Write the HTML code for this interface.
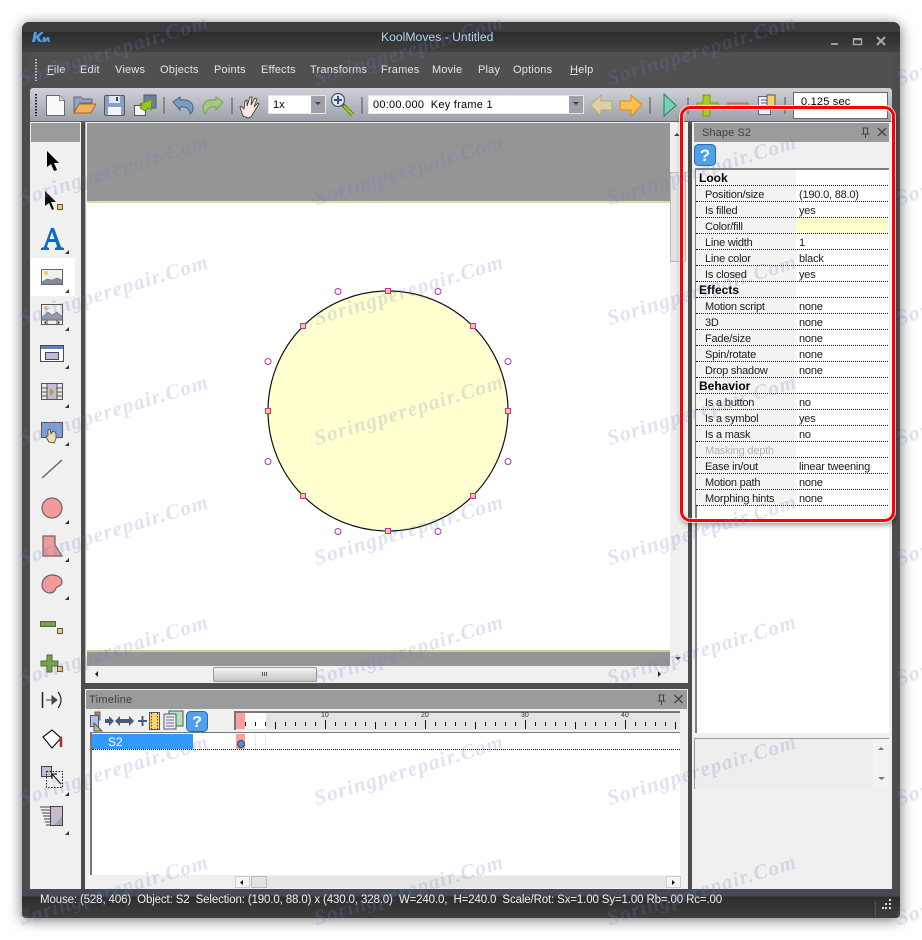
<!DOCTYPE html>
<html><head><meta charset="utf-8"><title>KoolMoves</title>
<style>
html,body{margin:0;padding:0;background:#fff;width:922px;height:940px;overflow:hidden}
body{position:relative;font-family:"Liberation Sans",sans-serif;font-size:11px;color:#111}
.a{position:absolute}
.t{position:absolute;white-space:nowrap}
.m{position:absolute;top:64px;color:#e2e6ea;font-size:11px;letter-spacing:.2px;white-space:nowrap}
.r{position:absolute;left:696px;width:192px;height:15px;border-bottom:1px dotted #111}
.r .l{position:absolute;left:0;top:0;width:100px;height:15px;background:#f5f2f2}
.r b,.r i,.r span{position:absolute;top:2px;font-style:normal;white-space:nowrap;font-size:11px;line-height:14px;letter-spacing:-.2px}
.r b{left:3px;top:1px;font-size:12px;color:#000;letter-spacing:0}
.r i{left:9px;color:#1a1a1a}
.r span{left:103px;color:#1a1a1a}
.w{position:absolute;font:italic bold 21px "Liberation Serif",serif;letter-spacing:1.2px;color:rgba(110,128,190,.22);transform-origin:0 100%;transform:rotate(-17deg);white-space:nowrap;line-height:24px}
svg{position:absolute;left:0;top:0}
</style></head><body>

<!-- window -->
<div class="a" style="left:22px;top:22px;width:878px;height:896px;border-radius:7px 7px 4px 4px;background:#4d4d4d;box-shadow:0 2px 14px rgba(0,0,0,.55)"></div>
<div class="a" style="left:22px;top:22px;width:878px;height:10px;background:#3c3c3e;border-radius:7px 7px 0 0"></div>
<div class="a" style="left:22px;top:32px;width:878px;height:20px;background:linear-gradient(#2c2c2c,#414141)"></div>
<div class="a" style="left:30px;top:52px;width:862px;height:36px;background:#505050"></div>
<div class="a" style="left:30px;top:88px;width:862px;height:33px;border-radius:3px 3px 0 0;background:linear-gradient(#cfd1d6,#9da1aa)"></div>
<div class="a" style="left:30px;top:121px;width:862px;height:2px;background:#5e6068"></div>
<div class="t" style="left:381px;top:30px;color:#b4d8f2;font-size:12.2px">KoolMoves - Untitled</div>

<div class="m" style="left:47px"><u>F</u>ile</div>
<div class="m" style="left:80px">Edit</div>
<div class="m" style="left:115px">Views</div>
<div class="m" style="left:160px">Objects</div>
<div class="m" style="left:214px">Points</div>
<div class="m" style="left:261px">Effects</div>
<div class="m" style="left:310px">Transforms</div>
<div class="m" style="left:381px">Frames</div>
<div class="m" style="left:432px">Movie</div>
<div class="m" style="left:478px">Play</div>
<div class="m" style="left:513px">Options</div>
<div class="m" style="left:570px"><u>H</u>elp</div>

<!-- toolbar fields -->
<div class="a" style="left:268px;top:95px;width:58px;height:19px;background:#fff"></div>
<div class="a" style="left:311px;top:96px;width:14px;height:17px;background:#9ea1a8"></div>
<div class="t" style="left:273px;top:99px;font-size:11px;color:#000">1x</div>
<div class="a" style="left:368px;top:95px;width:216px;height:19px;background:#fff"></div>
<div class="a" style="left:569px;top:96px;width:14px;height:17px;background:#9ea1a8"></div>
<div class="t" style="left:373px;top:99px;font-size:11px;color:#000;letter-spacing:.25px">00:00.000&nbsp; Key frame 1</div>
<div class="a" style="left:793px;top:92px;width:93px;height:25px;background:#fff;border:1px solid #666"></div>
<div class="t" style="left:801px;top:96px;font-size:11px;color:#000;letter-spacing:.2px">0.125 sec</div>

<!-- toolbox -->
<div class="a" style="left:30px;top:122px;width:51px;height:767px;background:#f0f0f0"></div>
<div class="a" style="left:31px;top:123px;width:49px;height:19px;background:#9a9c9c"></div>
<div class="a" style="left:31px;top:258px;width:44px;height:38px;background:#fff"></div>

<!-- canvas -->
<div class="a" style="left:85px;top:122px;width:603px;height:561px;background:#f0f0f0;border-left:1px solid #b8b8b8;box-sizing:border-box"></div>
<div class="a" style="left:87px;top:123px;width:583px;height:543px;background:#fff"></div>
<div class="a" style="left:87px;top:123px;width:583px;height:78px;background:#959595"></div>
<div class="a" style="left:87px;top:201px;width:583px;height:2px;background:#dedcaa"></div>
<div class="a" style="left:87px;top:650px;width:583px;height:2px;background:#cfcc9e"></div>
<div class="a" style="left:87px;top:652px;width:583px;height:14px;background:#959595"></div>
<div class="a" style="left:670px;top:172px;width:16px;height:90px;background:#e4e4e4;border:1px solid #bbb;box-sizing:border-box"></div>
<div class="a" style="left:213px;top:667px;width:104px;height:15px;background:linear-gradient(#f4f4f4,#c4c4c4);border:1px solid #999;box-sizing:border-box;border-radius:2px"></div>

<!-- timeline -->
<div class="a" style="left:85px;top:689px;width:603px;height:200px;background:#f0f0f0"></div>
<div class="a" style="left:86px;top:690px;width:601px;height:19px;background:#9a9c9c"></div>
<div class="t" style="left:89px;top:694px;color:#3e3e3e;font-size:11px;letter-spacing:.3px">Timeline</div>
<div class="a" style="left:234px;top:711px;width:446px;height:2px;background:#777"></div>
<div class="a" style="left:234px;top:713px;width:446px;height:17px;background:#e4e4e4"></div>
<div class="a" style="left:234px;top:713px;width:2px;height:17px;background:#777"></div>
<div class="a" style="left:236px;top:713px;width:30px;height:16px;background:#fff"></div>
<div class="a" style="left:236px;top:713px;width:9px;height:16px;background:#ff9c9c"></div>
<div class="a" style="left:90px;top:732px;width:590px;height:143px;background:#fff;border-top:1px solid #777;border-left:2px solid #777;box-sizing:border-box"></div>
<div class="a" style="left:92px;top:734px;width:101px;height:15px;background:#3399ff"></div>
<div class="t" style="left:108px;top:735px;color:#fff;font-size:12px">S2</div>
<div class="a" style="left:92px;top:749px;width:588px;height:0;border-top:1px dotted #111"></div>
<div class="a" style="left:236px;top:734px;width:9px;height:15px;background:#ff9c9c"></div>
<div class="a" style="left:255px;top:734px;width:1px;height:15px;background:#e8e8e8"></div>
<div class="a" style="left:265px;top:734px;width:1px;height:15px;background:#e8e8e8"></div>
<div class="a" style="left:237px;top:740px;width:6px;height:6px;border-radius:50%;background:#4a90d8;border:.5px solid #345"></div>
<div class="t" style="left:321px;top:712px;font-size:7px;color:#333">10</div>
<div class="t" style="left:421px;top:712px;font-size:7px;color:#333">20</div>
<div class="t" style="left:521px;top:712px;font-size:7px;color:#333">30</div>
<div class="t" style="left:621px;top:712px;font-size:7px;color:#333">40</div>
<!-- timeline hscroll -->
<div class="a" style="left:266px;top:876px;width:400px;height:12px;background:#e6e6e6"></div>
<div class="a" style="left:235px;top:876px;width:15px;height:12px;background:#f4f4f4;border:1px solid #ccc;box-sizing:border-box"></div>
<div class="a" style="left:251px;top:876px;width:16px;height:12px;background:#e2e2e2;border:1px solid #bbb;box-sizing:border-box"></div>
<div class="a" style="left:666px;top:876px;width:15px;height:12px;background:#f4f4f4;border:1px solid #ccc;box-sizing:border-box"></div>

<!-- right panel -->
<div class="a" style="left:692px;top:122px;width:200px;height:767px;background:#f0f0f0"></div>
<div class="a" style="left:694px;top:123px;width:195px;height:19px;background:#9a9c9c"></div>
<div class="t" style="left:702px;top:127px;color:#3e3e3e;font-size:11px;letter-spacing:.1px">Shape S2</div>
<div class="a" style="left:695px;top:168px;width:194px;height:565px;background:#fff;border-top:2px solid #808080;border-left:2px solid #808080;box-sizing:border-box"></div>
<div class="a" style="left:694px;top:738px;width:195px;height:51px;background:#eee;border-top:1px solid #999;border-left:1px solid #999;box-sizing:border-box"></div>
<div class="a" style="left:873px;top:739px;width:16px;height:49px;background:#f2f2f2"></div>

<div class="r" style="top:170px"><div class="l"></div><b>Look</b></div>
<div class="r" style="top:186px"><div class="l"></div><i>Position/size</i><span>(190.0, 88.0)</span></div>
<div class="r" style="top:202px"><div class="l"></div><i>Is filled</i><span>yes</span></div>
<div class="r" style="top:218px"><div class="l"></div><div class="a" style="left:100px;top:0;width:92px;height:15px;background:#ffffcc"></div><i>Color/fill</i></div>
<div class="r" style="top:234px"><div class="l"></div><i>Line width</i><span>1</span></div>
<div class="r" style="top:250px"><div class="l"></div><i>Line color</i><span>black</span></div>
<div class="r" style="top:266px"><div class="l"></div><i>Is closed</i><span>yes</span></div>
<div class="r" style="top:282px"><div class="l"></div><b>Effects</b></div>
<div class="r" style="top:298px"><div class="l"></div><i>Motion script</i><span>none</span></div>
<div class="r" style="top:314px"><div class="l"></div><i>3D</i><span>none</span></div>
<div class="r" style="top:330px"><div class="l"></div><i>Fade/size</i><span>none</span></div>
<div class="r" style="top:346px"><div class="l"></div><i>Spin/rotate</i><span>none</span></div>
<div class="r" style="top:362px"><div class="l"></div><i>Drop shadow</i><span>none</span></div>
<div class="r" style="top:378px"><div class="l"></div><b>Behavior</b></div>
<div class="r" style="top:394px"><div class="l"></div><i>Is a button</i><span>no</span></div>
<div class="r" style="top:410px"><div class="l"></div><i>Is a symbol</i><span>yes</span></div>
<div class="r" style="top:426px"><div class="l"></div><i>Is a mask</i><span>no</span></div>
<div class="r" style="top:442px"><div class="l"></div><i style="color:#b4b4b4">Masking depth</i></div>
<div class="r" style="top:458px"><div class="l"></div><i>Ease in/out</i><span>linear tweening</span></div>
<div class="r" style="top:474px"><div class="l"></div><i>Motion path</i><span>none</span></div>
<div class="r" style="top:490px"><div class="l"></div><i>Morphing hints</i><span>none</span></div>

<!-- status -->
<div class="a" style="left:22px;top:889px;width:878px;height:29px;border-radius:0 0 5px 5px;background:linear-gradient(#474a54 0,#474a54 7px,#2e2e2e 8px,#3e3e3e 100%)"></div>
<div class="t" style="left:40px;top:894px;color:#f0f2f4;font-size:11.5px;letter-spacing:-.135px">Mouse: (528, 406)&nbsp; Object: S2&nbsp; Selection: (190.0, 88.0) x (430.0, 328.0)&nbsp; W=240.0,&nbsp; H=240.0&nbsp; Scale/Rot: Sx=1.00 Sy=1.00 Rb=.00 Rc=.00</div>

<!-- highlight shadow -->
<div class="a" style="left:680px;top:106px;width:215px;height:416px;border-radius:10px;box-shadow:1px 3px 6px rgba(0,0,0,.4)"></div>

<!-- icons -->
<svg width="922" height="940" viewBox="0 0 922 940">
<!-- logo -->
<path d="M34 32h3l-1 4 5-4h3l-5 5 3 5h-3l-3-4-1 4h-3zM42 42l1-5h2l1 2 1-2h2l1 5h-2l-1-2-1 2h-2l-.5-1-.5 1z" fill="#4a9ee8"/>
<!-- window buttons -->
<rect x="831" y="43" width="7" height="2" fill="#9a9a9a"/>
<rect x="853.5" y="39.5" width="8" height="5" fill="none" stroke="#a8a8a8" stroke-width="1.4"/><rect x="853" y="38" width="9" height="2" fill="#a8a8a8"/>
<path d="M877 37l8 8M885 37l-8 8" stroke="#a8a8a8" stroke-width="2"/>
<!-- grips -->
<path d="M36 59v22" stroke="#e8e8e8" stroke-dasharray="1.5 1.5" stroke-width="1.5"/>
<path d="M36 94v22" stroke="#222" stroke-dasharray="1.5 1.5" stroke-width="2"/>
<!-- new -->
<path d="M46.500 95.500h13l5 5v15h-18z" fill="#fafafa" stroke="#667"/><path d="M59.500 95.500v5h5" fill="#ddd" stroke="#889"/>
<!-- open -->
<path d="M74 112V97h7l2 2h9v4H80z" fill="#8aa4c4" stroke="#667"/><path d="M74 113l5-9h17l-5 9z" fill="#f0b060" stroke="#a06a20"/>
<!-- save -->
<rect x="104.500" y="95.500" width="20" height="20" rx="1.500" fill="#8a9fc4" stroke="#556"/><rect x="109" y="96" width="11" height="7" fill="#dfe4ee"/><rect x="116" y="97" width="2" height="4" fill="#444"/><rect x="108" y="107" width="13" height="8" fill="#f4f4f4"/>
<!-- export -->
<rect x="144" y="95" width="12" height="13" fill="#6f7fa4" stroke="#556"/><rect x="134.500" y="105.500" width="11" height="10" fill="#f4f4f4" stroke="#555"/><path d="M140 108l2-3-2-1 12-5-1 11-3-2-3 3z" fill="#92c820" stroke="#6a9010"/>
<!-- seps -->
<path d="M164 97v17M232 97v17M362 97v17M650 97v17M688 97v17M785 97v17" stroke="#555" stroke-width="1"/>
<!-- undo -->
<path d="M173 102l7-5v3c8-1 13 2 13 8 0 3-1 5-3 6 0-5-4-8-10-7v3z" fill="#7f9ac4" stroke="#4a6288"/>
<!-- redo -->
<path d="M223 102l-7-5v3c-8-1-13 2-13 8 0 3 1 5 3 6 0-5 4-8 10-7v3z" fill="#a6c87c" stroke="#7d9c5a"/>
<!-- hand -->
<path d="M243 116l-3-9 1-1 3 3 1-8 2-1 0 6 3-9h2l-1 8 4-7 2 1-3 8 4-4 1 1-5 8c-2 2-1 5-6 6z" fill="#fde7e0" stroke="#333" stroke-width=".8"/>
<!-- combo arrows -->
<path d="M315 102h6l-3 3zM573 102h6l-3 3z" fill="#444"/>
<rect x="268.500" y="95.500" width="57" height="18" fill="none" stroke="#e6e6ea"/><rect x="368.500" y="95.500" width="215" height="18" fill="none" stroke="#e6e6ea"/>
<!-- zoom -->
<path d="M343 105l10 10" stroke="#5a7a10" stroke-width="4"/><path d="M344 106l9 9" stroke="#a4cc30" stroke-width="2"/>
<circle cx="338" cy="100" r="6.500" fill="#dfe8f4" stroke="#4a5670" stroke-width="1.300"/><path d="M334 100h8M338 96v8" stroke="#33508a" stroke-width="2"/>
<!-- arrows -->
<path d="M590 105l11-10v6h11v9h-11v6z" fill="#dcd0a4" stroke="#b4a874" stroke-linejoin="round"/>
<path d="M642 105l-11-10v6h-11v9h11v6z" fill="#ffc050" stroke="#d88a20" stroke-linejoin="round"/>
<!-- play -->
<path d="M664 94l12 11.500-12 10.500z" fill="#78d0b0" stroke="#2a7a70"/>
<!-- plus -->
<path d="M703 95h7v8h8v6h-8v7h-7v-7h-6v-6h6z" fill="#a8cc20" stroke="#7a9a10"/>
<!-- minus -->
<rect x="728" y="103" width="20" height="6" fill="#e08a8a" stroke="#b06060"/>
<!-- doc -->
<rect x="758.500" y="96.500" width="12" height="18" fill="#eef" stroke="#667"/><path d="M761 100h7M761 103h7M761 106h7M761 109h7" stroke="#667"/><rect x="767" y="95" width="8" height="11" fill="#fbd06a" stroke="#555"/>

<!-- toolbox icons -->
<path d="M47 151v16l4-3 3 7 3-1-3-7h5z" fill="#000"/>
<path d="M45 191v15l4-3 3 7 2-1-3-7h5z" fill="#111"/><rect x="57.500" y="204.500" width="5" height="5" fill="#f8c860" stroke="#555"/>
<path d="M41 248l3-1 7-19h3l7 19 3 1v2H55v-2l2-1-1.500-5h-7L47 247l2 1v2h-8zM49.500 239h5L52 232z" fill="#0a6cc4" fill-rule="evenodd"/>
<g id="tri" fill="#333"><path d="M69 254v-4l-4 4zM69 293v-4l-4 4zM69 331v-4l-4 4zM69 369v-4l-4 4zM69 408v-4l-4 4zM69 446v-4l-4 4zM69 524v-4l-4 4zM69 562v-4l-4 4zM69 600v-4l-4 4zM69 796v-4l-4 4zM69 835v-4l-4 4z"/></g>
<!-- image -->
<rect x="41.500" y="269.500" width="21" height="15" fill="#eef0f4" stroke="#666"/><circle cx="46" cy="273" r="2" fill="#f4c060"/><path d="M42 282l5-3 5 1 5-2 5 2v4H42z" fill="#8a8a90" stroke="#5a7ab0" stroke-width=".6"/>
<rect x="41.500" y="304.500" width="21" height="20" fill="#eef0f4" stroke="#555"/><circle cx="46" cy="308" r="2" fill="#f4c060"/><path d="M42 317l6-5 4 3 5-3 5 4v3H42z" fill="#9a9aa0" stroke="#5a7ab0" stroke-width=".6"/><path d="M42 320h21M47 320v5M57 320v5" stroke="#555"/><path d="M46 321v3l-2-1.500zM58 321v3l2-1.500z" fill="#226"/>
<!-- movie clip -->
<rect x="40.500" y="345.500" width="23" height="16" fill="#fff" stroke="#444a60"/><rect x="41" y="346" width="22" height="3" fill="#6080c0"/><rect x="45.500" y="352.500" width="13" height="7" fill="#c8b8d8" stroke="#445"/>
<!-- film -->
<rect x="41.500" y="383.500" width="21" height="16" fill="#e8e8ec" stroke="#555"/><rect x="47" y="384" width="10" height="15" fill="#c8b8d8"/><path d="M47 384v15M57 384v15M42 388h5M42 392h5M42 396h5M57 388h5M57 392h5M57 396h5" stroke="#555"/><path d="M50 388v8l4-4z" fill="#90b020"/>
<!-- button -->
<rect x="41.500" y="422.500" width="21" height="15" fill="#7f9fd8" stroke="#555"/><path d="M49 442l-3-5 2-1v-6l2-1 1 5 2-3 2 1 1 2v5l-2 4z" fill="#f4dcb4" stroke="#444" stroke-width=".8"/>
<!-- line -->
<path d="M42 478l20-18" stroke="#666" stroke-width="1.500"/>
<!-- circle -->
<circle cx="52" cy="508" r="10" fill="#f09a9a" stroke="#666" stroke-width="1.200"/>
<!-- poly -->
<path d="M43 536h12v9l7 11H43z" fill="#f09a9a" stroke="#666" stroke-width="1.200"/>
<!-- blob -->
<path d="M52 575c6 0 10 3 10 7 0 4-4 4-6 6-1 3-3 5-6 5-5 0-8-4-8-8 0-6 5-10 10-10z" fill="#f09a9a" stroke="#666" stroke-width="1.200"/>
<!-- minus pt -->
<rect x="40.500" y="621.500" width="15" height="5" fill="#78a048" stroke="#506a30"/><rect x="57.500" y="628.500" width="5" height="5" fill="#f8c860" stroke="#555"/>
<!-- plus pt -->
<path d="M47 655h5v6h6v5h-6v6h-5v-6h-6v-5h6z" fill="#78a048" stroke="#506a30"/><rect x="57.500" y="666.500" width="5" height="5" fill="#f8c860" stroke="#555"/>
<!-- motion -->
<path d="M42.500 692v16" stroke="#222" stroke-width="1.500"/><path d="M46 700h6M52 696l5 4-5 4z" stroke="#445" fill="#445"/><path d="M58 692c4 5 4 11 0 16" fill="none" stroke="#222" stroke-width="1.200"/>
<!-- bucket -->
<path d="M43 737l9-7 9 8-9 10z" fill="#fff" stroke="#111" stroke-width="1.200"/><path d="M60 737l1 1v9" stroke="#a03030" stroke-width="2.500" fill="none"/>
<!-- resize -->
<rect x="41.500" y="766.500" width="10" height="10" fill="#c8b8d0" stroke="#444"/><rect x="46.500" y="771.500" width="16" height="16" fill="none" stroke="#111" stroke-dasharray="1.500 1.500"/><path d="M52 774l9 10M52 774v5M52 774h5" stroke="#222" stroke-width="1.300" fill="none"/>
<!-- layers -->
<path d="M40 807h10M41 810h9M42 813h8M43 816h7M44 819h6M45 822h5M46 825h4" stroke="#444"/><rect x="50.500" y="806.500" width="12" height="19" fill="#c8b8d0" stroke="#444"/><path d="M62 816v9h-8z" fill="#9aaaa0"/>

<!-- canvas scroll arrows -->
<path d="M674 136l3-3 3 3zM675 657h6l-3 3z" fill="#444"/>
<path d="M98 671v6l-3-3zM658 671v6l3-3z" fill="#222"/>
<path d="M262.500 672v4M264.500 672v4M266.500 672v4" stroke="#555"/>

<!-- shape -->
<circle cx="388" cy="411" r="120" fill="#ffffcf" stroke="#111" stroke-width="1.200"/>
<g fill="#f8cc70" stroke="#c828c0" stroke-width="1">
<rect x="385.500" y="288.500" width="5" height="5"/><rect x="470.500" y="323.500" width="5" height="5"/><rect x="505.500" y="408.500" width="5" height="5"/><rect x="470.500" y="493.500" width="5" height="5"/><rect x="385.500" y="528.500" width="5" height="5"/><rect x="300.500" y="493.500" width="5" height="5"/><rect x="265.500" y="408.500" width="5" height="5"/><rect x="300.500" y="323.500" width="5" height="5"/>
</g>
<g fill="#fff" stroke="#b030b0" stroke-width="1">
<circle cx="338" cy="291.500" r="3"/><circle cx="438" cy="291.500" r="3"/><circle cx="508" cy="361.500" r="3"/><circle cx="508" cy="461.500" r="3"/><circle cx="438" cy="531.500" r="3"/><circle cx="338" cy="531.500" r="3"/><circle cx="268" cy="461.500" r="3"/><circle cx="268" cy="361.500" r="3"/>
</g>

<!-- timeline toolbar icons -->
<rect x="95" y="712" width="5" height="8" fill="#d07060" stroke="#666"/><rect x="90.500" y="715.500" width="8" height="11" fill="#a8c4ec" stroke="#556"/><path d="M94 731v-8l8 8z" fill="#a8c870" stroke="#556"/>
<path d="M105 719h4v-3l5 5-5 5v-3h-4z" fill="#4a5a78"/>
<path d="M115 721l5-5v3h9v-3l5 5-5 5v-3h-9v3z" fill="#4a5a78"/>
<path d="M138 721h9M142.500 716v10" stroke="#4a5a78" stroke-width="2"/>
<rect x="149.500" y="712.500" width="10" height="17" fill="#fbd06a" stroke="#555"/><path d="M151.500 713v16M157.500 713v16" stroke="#555" stroke-dasharray="1.500 1.500"/>
<rect x="169" y="711" width="14" height="15" fill="#b0e4b8" stroke="#556"/><path d="M164 714h12v15h-12z" fill="#eef" stroke="#556"/><path d="M166 717h8M166 720h8M166 723h8M166 726h8" stroke="#667"/>
<!-- help buttons -->
<g font-family="Liberation Sans,sans-serif" font-weight="bold" text-anchor="middle">
<rect x="186.500" y="711.500" width="21" height="20" rx="4" fill="#4f9fea" stroke="#2a6ab0"/><text x="197" y="727" font-size="16" fill="#fff">?</text>
<rect x="694.500" y="144.500" width="21" height="21" rx="4" fill="#4f9fea" stroke="#2a6ab0"/><text x="705" y="161" font-size="17" fill="#fff">?</text>
</g>

<!-- ruler ticks -->
<path d="M245.500 722v4M255.500 722v4M265.500 722v4M275.500 722v7M285.500 722v4M295.500 722v4M305.500 722v4M315.500 722v4M325.500 720v9M335.500 722v4M345.500 722v4M355.500 722v4M365.500 722v4M375.500 722v7M385.500 722v4M395.500 722v4M405.500 722v4M415.500 722v4M425.500 720v9M435.500 722v4M445.500 722v4M455.500 722v4M465.500 722v4M475.500 722v7M485.500 722v4M495.500 722v4M505.500 722v4M515.500 722v4M525.500 720v9M535.500 722v4M545.500 722v4M555.500 722v4M565.500 722v4M575.500 722v7M585.500 722v4M595.500 722v4M605.500 722v4M615.500 722v4M625.500 720v9M635.500 722v4M645.500 722v4M655.500 722v4M665.500 722v4M675.500 722v7" stroke="#111" fill="none"/>

<!-- pins & close -->
<path d="M658.500 695h6M659.500 695v6h4v-6M661.500 701v4M657.500 701h8" stroke="#444" fill="none"/>
<path d="M674.500 695l8 8M682.500 695l-8 8" stroke="#444" stroke-width="1.300"/>
<path d="M862.500 128h6M863.500 128v6h4v-6M865.500 134v4M861.500 134h8" stroke="#444" fill="none"/>
<path d="M878 128l8 8M886 128l-8 8" stroke="#444" stroke-width="1.300"/>

<!-- timeline hscroll arrows -->
<path d="M243 880v5l-3-2.500zM672 880v5l3-2.500z" fill="#111"/>
<!-- lower panel arrows -->
<path d="M878 750l3-3 3 3zM878 777h7l-3.500 3z" fill="#777"/>
<!-- status grip -->
<path d="M874 901v16" stroke="#222"/><path d="M875 901v16" stroke="#666"/>
<path d="M889 899h2v2h-2zM885 903h2v2h-2zM889 903h2v2h-2zM882 907h2v2h-2zM885 907h2v2h-2zM889 907h2v2h-2z" fill="#ddd"/>

<!-- highlight -->
<rect x="681.500" y="107.500" width="212" height="413" rx="9" fill="none" stroke="#fff" stroke-width="5" opacity=".75"/>
<rect x="681.500" y="107.500" width="212" height="413" rx="9" fill="none" stroke="#f00" stroke-width="3"/>
</svg>

<!-- watermark -->
<div class="w" style="left:23px;top:66px">Soringperepair.Com</div><div class="w" style="left:318px;top:66px">Soringperepair.Com</div><div class="w" style="left:611px;top:66px">Soringperepair.Com</div><div class="w" style="left:900px;top:66px">Soringperepair.Com</div>
<div class="w" style="left:23px;top:186px">Soringperepair.Com</div><div class="w" style="left:318px;top:186px">Soringperepair.Com</div><div class="w" style="left:611px;top:186px">Soringperepair.Com</div><div class="w" style="left:900px;top:186px">Soringperepair.Com</div>
<div class="w" style="left:23px;top:306px">Soringperepair.Com</div><div class="w" style="left:318px;top:306px">Soringperepair.Com</div><div class="w" style="left:611px;top:306px">Soringperepair.Com</div><div class="w" style="left:900px;top:306px">Soringperepair.Com</div>
<div class="w" style="left:23px;top:426px">Soringperepair.Com</div><div class="w" style="left:318px;top:426px">Soringperepair.Com</div><div class="w" style="left:611px;top:426px">Soringperepair.Com</div><div class="w" style="left:900px;top:426px">Soringperepair.Com</div>
<div class="w" style="left:23px;top:546px">Soringperepair.Com</div><div class="w" style="left:318px;top:546px">Soringperepair.Com</div><div class="w" style="left:611px;top:546px">Soringperepair.Com</div><div class="w" style="left:900px;top:546px">Soringperepair.Com</div>
<div class="w" style="left:23px;top:666px">Soringperepair.Com</div><div class="w" style="left:318px;top:666px">Soringperepair.Com</div><div class="w" style="left:611px;top:666px">Soringperepair.Com</div><div class="w" style="left:900px;top:666px">Soringperepair.Com</div>
<div class="w" style="left:23px;top:786px">Soringperepair.Com</div><div class="w" style="left:318px;top:786px">Soringperepair.Com</div><div class="w" style="left:611px;top:786px">Soringperepair.Com</div><div class="w" style="left:900px;top:786px">Soringperepair.Com</div>
<div class="w" style="left:23px;top:906px">Soringperepair.Com</div><div class="w" style="left:318px;top:906px">Soringperepair.Com</div><div class="w" style="left:611px;top:906px">Soringperepair.Com</div><div class="w" style="left:900px;top:906px">Soringperepair.Com</div>
</body></html>
